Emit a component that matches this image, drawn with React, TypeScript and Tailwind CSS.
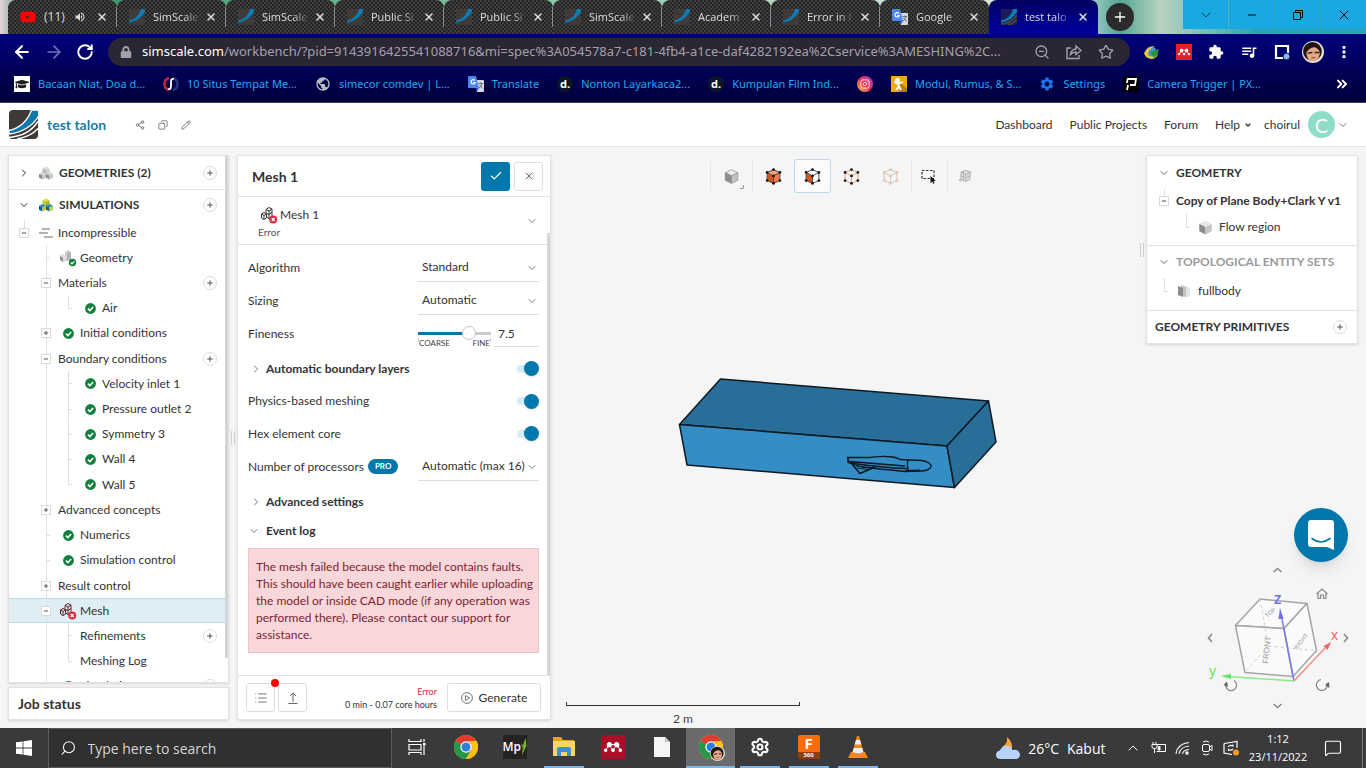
import React from "react";
import {
  ArrowLeft, ArrowRight, RotateCw, ZoomOut, Star, EllipsisVertical,
  X, Plus, Minus, ChevronDown, ChevronRight, ChevronUp, ChevronsRight, Share2, Copy,
  Pencil, Check, List, Search, Instagram, Settings as Cog, MessageSquare,
} from "lucide-react";
import { FaYoutube, FaLock, FaGraduationCap } from "react-icons/fa";
import { MdExtension, MdOutlineQueueMusic, MdSettings, MdPublic, MdVolumeUp } from "react-icons/md";
import { SiMendeley } from "react-icons/si";

/* ---------- drawings ---------- */

function Logo({ className }: { className: string }) {
  return (
    <svg viewBox="0 0 29 29" className={className} aria-hidden="true">
      <path d="M4 0H29V25Q29 29 25 29H3Q0 29 0 26V4Q0 0 4 0Z" fill="#403a37" />
      <path d="M0 20.500C11 18 18.500 11 22.500 0H30V5.500C23 17 12 22.500 0 24Z" fill="#0e79ad" stroke="#fff" strokeWidth="1.300" />
      <path d="M0 27.500C13 26.500 23 21 29 11.500" fill="none" stroke="#fff" strokeWidth="1.500" />
      <path d="M8 29C17 27.500 24 24 29 18.500" fill="none" stroke="#fff" strokeWidth="1.400" />
    </svg>
  );
}

function Favicon({ active }: { active?: boolean }) {
  return (
    <svg viewBox="0 0 16 16" className="size-4 shrink-0" aria-hidden="true">
      <rect width="16" height="16" fill={active ? "#1d1a55" : "#3f3b39"} />
      <path d="M0 11.500C6 10.500 10.500 6 12 0H16V2.500C13 8.500 7 12.500 0 13.500Z" fill="#0e7bb5" />
      {active && (
        <g fill="none" stroke="#4a4542" strokeWidth="2">
          <path d="M0 15C7 14.500 12.500 11 16 6" />
          <path d="M7 16C11 15 14 13 16 10.500" />
        </g>
      )}
    </svg>
  );
}

function TranslateIcon() {
  return (
    <svg viewBox="0 0 16 16" className="size-4 shrink-0" aria-hidden="true">
      <path d="M7 4H15Q16 4 16 5V15Q16 16 15 16H9Z" fill="#d5d8dc" />
      <path d="M1 0H8L11 12H1Q0 12 0 11V1Q0 0 1 0Z" fill="#4b86ee" />
      <path d="M7.500 12H11L9 15Z" fill="#2a56c6" />
      <path d="M7 4.500A2.200 2.200 0 1 0 7.300 6.500H5.200" fill="none" stroke="#fff" strokeWidth="1.200" />
      <path d="M10.500 7.500H15M12.700 6.500V7.500M14 7.500Q13 11 11 12M11.500 9L14.500 12.500" fill="none" stroke="#5f6b7a" strokeWidth="1" />
    </svg>
  );
}

function Cube({ top, left, right, edge, className }: { top: string; left: string; right: string; edge?: string; className: string }) {
  return (
    <svg viewBox="0 0 24 24" className={className} aria-hidden="true">
      <g stroke={edge ?? "none"} strokeWidth="1.200" strokeLinejoin="round">
        <path d="M12 1L22 6L12 11L2 6Z" fill={top} />
        <path d="M2 6L12 11V23L2 18Z" fill={left} />
        <path d="M22 6L12 11V23L22 18Z" fill={right} />
      </g>
    </svg>
  );
}

function MiniCube({ x, y, c }: { x: number; y: number; c: string[] }) {
  return (
    <g transform={`translate(${x} ${y})`}>
      <path d="M3.500 0L7 1.800L3.500 3.600L0 1.800Z" fill={c[0]} />
      <path d="M0 1.800L3.500 3.600V7.500L0 5.700Z" fill={c[1]} />
      <path d="M7 1.800L3.500 3.600V7.500L7 5.700Z" fill={c[2]} />
    </g>
  );
}

function Cubes({ color }: { color?: boolean }) {
  const a = color ? ["#d9dc3c", "#c4cc2b", "#a9b526"] : ["#dcdcdc", "#b9b9b9", "#cfcfcf"];
  const b = color ? ["#2b8cbd", "#0a5f8c", "#c4cc2b"] : ["#d2d2d2", "#8f8f8f", "#c6c6c6"];
  return (
    <svg viewBox="0 0 14 14" className="ml-[9px] size-[14px]" aria-hidden="true">
      <MiniCube x={3.5} y={0.5} c={a} />
      <MiniCube x={0} y={6} c={b} />
      <MiniCube x={7} y={6} c={b} />
    </svg>
  );
}

function GeometryIcon() {
  return (
    <svg viewBox="0 0 18 18" className="size-[18px]" aria-hidden="true">
      <path d="M6 3L9 1L12 3V10L8 12L6 11Z" fill="#cfcfcf" />
      <path d="M8 4L12 3V10L8 12Z" fill="#b4b4b4" />
      <path d="M1 6L4 5L7 7V12L4 13L1 11Z" fill="#dedede" />
      <path d="M1 7L4 9V13L1 11Z" fill="#909090" />
      <circle cx="13.500" cy="13.500" r="3.700" fill="#10803f" />
      <path d="M11.700 13.500L13 14.900L15.400 12.300" fill="none" stroke="#fff" strokeWidth="1.200" />
    </svg>
  );
}

function MeshIcon({ dark }: { dark?: boolean }) {
  const s = dark ? "#333" : "#5c2229";
  return (
    <svg viewBox="0 0 18 18" className="size-[18px]" aria-hidden="true">
      <g fill="none" stroke={s} strokeWidth="1">
        <path d="M6 3.500L9 1.500L12 3V10L9 12.500L6.500 11M6 3.500L9 5L12 3M9 5V12.500M6 3.500V7M6.500 7.500L9 8.500L12 6.500" />
        <path d="M1.500 8L4 6.500L6.500 8V12L4 13.500L1.500 12ZM1.500 8L4 9.500L6.500 8M4 9.500V13.500" />
      </g>
      <circle cx="13.200" cy="13.500" r="4" fill="#df2b3b" />
      <path d="M11.700 12L14.700 15M14.700 12L11.700 15" stroke="#fff" strokeWidth="1.200" />
    </svg>
  );
}

function OkIcon() {
  return (
    <svg viewBox="0 0 12 12" className="size-[11px]" aria-hidden="true">
      <circle cx="6" cy="6" r="5.900" fill="#10803f" />
      <path d="M3.200 6.100L5.300 8.200L8.900 4.300" fill="none" stroke="#fff" strokeWidth="1.700" />
    </svg>
  );
}

function FlowIcon() {
  return (
    <svg viewBox="0 0 14 10" className="h-[10px] w-[14px]" aria-hidden="true">
      <path d="M3 1H11M0 5H9M5 9H14" stroke="#9b9b9b" strokeWidth="1.300" />
    </svg>
  );
}

type PickStyle = "volume" | "face" | "edge" | "vertex";

function PickCube({ kind }: { kind: PickStyle }) {
  const line = kind === "edge" ? "#eb9b78" : kind === "vertex" ? "#c9c4c2" : "#4a4a4a";
  const dot = kind === "vertex" ? "#f2bfa9" : "#161616";
  const pts = [[8, 1.5], [14, 4.2], [14, 11.8], [8, 14.5], [2, 11.8], [2, 4.2], [8, 7.5]];
  return (
    <svg viewBox="0 0 16 16" className="size-[17px]" aria-hidden="true">
      {kind === "volume" && (
        <g>
          <path d="M8 1.500L14 4.200L8 7.500L2 4.200Z" fill="#f2a07c" />
          <path d="M2 4.200L8 7.500V14.500L2 11.800Z" fill="#dd5317" />
          <path d="M14 4.200L8 7.500V14.500L14 11.800Z" fill="#ee7d4c" />
        </g>
      )}
      {kind === "face" && (
        <g>
          <path d="M8 1.500L14 4.200V11.800L8 14.500L2 11.800V4.200Z" fill="#fff" />
          <path d="M2 4.200L8 7.500V14.500L2 11.800Z" fill="#dd5317" />
        </g>
      )}
      <path d="M8 1.500L14 4.200V11.800L8 14.500L2 11.800V4.200ZM2 4.200L8 7.500L14 4.200M8 7.500V14.500" fill="none" stroke={line} strokeWidth="0.900" />
      {pts.map(([x, y]) => (
        <circle key={`${x}-${y}`} cx={x} cy={y} r="1.300" fill={dot} />
      ))}
    </svg>
  );
}

function Model() {
  return (
    <svg viewBox="676 374 324 118" className="h-[118px] w-[324px]" role="img" aria-label="Flow region model">
      <g stroke="#0d1a22" strokeWidth="1.500" strokeLinejoin="round">
        <path d="M720.500 379L988.500 401L947 446L679.500 424.500Z" fill="#296d99" />
        <path d="M679.500 424.500L947 446L954.500 487.500L687 465Z" fill="#348dc5" />
        <path d="M947 446L988.500 401L996 442L954.500 487.500Z" fill="#296d99" />
      </g>
      <g fill="none" stroke="#0a1a26" strokeWidth="1.300" strokeLinejoin="round">
        <path d="M847.500 457.500H870C876 457 880 456 886 456.500C893 456.500 897 457.500 900 459.500L922 460.500C928 461.500 931.500 464 931 466.500C930 469.500 926 471 920 471L905 471.500C890 470 875 468.500 862 467L849 463Z" />
        <path d="M852 464L860 473.500L875 467" strokeWidth="1.700" />
        <path d="M848 457V463M849 461.500L905 466M850 463C870 466 885 468 907 468.500M908 459.500Q906.500 465 908.500 471" />
        <path d="M856 466L869 467.500M857 468L868 469.500" strokeWidth="0.900" />
        <path d="M905 471L920 470.500" strokeWidth="2" />
      </g>
    </svg>
  );
}

function NavCube() {
  return (
    <svg viewBox="1198 562 160 154" className="h-[154px] w-[160px]" role="img" aria-label="View orientation">
      <g fill="#fafafa" stroke="#a5a5a5" strokeWidth="1.500" strokeLinejoin="round">
        <path d="M1260 599L1307 603.500L1284 628.500L1235.500 625.500Z" />
        <path d="M1235.500 625.500L1284 628.500L1293 676.500L1245 672.500Z" />
        <path d="M1284 628.500L1307 603.500L1316.500 650.500L1293 676.500Z" />
      </g>
      <path d="M1260 599L1268.500 646L1316 650.500M1268.500 646L1245 672" fill="none" stroke="#cfcfcf" strokeDasharray="3 3" />
      <g fill="#999" fontFamily="Liberation Sans, sans-serif" fontSize="8">
        <text transform="translate(1268 664) rotate(-84)">FRONT</text>
        <text transform="translate(1297 650) rotate(-52)" fontSize="6">RIGHT</text>
        <text transform="translate(1267 618) rotate(-40)" fontSize="6">TOP</text>
      </g>
      <path d="M1294 681L1281 614" stroke="#7c7cf0" strokeWidth="1.500" />
      <path d="M1280 608L1283.500 619L1278.500 619Z" fill="#6c6cf5" />
      <path d="M1294 681L1228 676.500" stroke="#86ee86" strokeWidth="1.500" />
      <path d="M1221 676L1231 674V679Z" fill="#5ee55e" />
      <path d="M1294 681L1326 647" stroke="#f78d8d" strokeWidth="1.500" />
      <path d="M1331 642L1327.500 650L1323.500 646Z" fill="#f06565" />
      <g fontFamily="Liberation Sans, sans-serif" fontSize="12" fontWeight="700">
        <text x="1274" y="604" fill="#6c6cf5">Z</text>
        <text x="1209" y="676" fill="#5ee55e" fontSize="14" fontWeight="400">y</text>
        <text x="1331" y="640" fill="#f06565" fontSize="14" fontWeight="400">x</text>
      </g>
      <g fill="none" stroke="#8a8a8a" strokeWidth="1.600">
        <path d="M1273.500 572L1277.500 568.500L1281.500 572M1273.500 704L1277.500 707.500L1281.500 704M1212 634L1208.500 638L1212 642M1344 634L1347.500 638L1344 642" />
        <path d="M1316.500 594L1322 589L1327.500 594M1318 593V598.500H1320.500V595H1323.500V598.500H1326V593" strokeWidth="1.200" />
        <path d="M1226 683A5.500 5.500 0 1 0 1234 680.500" strokeWidth="1.200" />
        <path d="M1327 683A5.500 5.500 0 1 1 1321 679.500" strokeWidth="1.200" />
      </g>
      <path d="M1223.500 685L1227 681.500L1228 687ZM1329 682L1325 685L1329.500 688Z" fill="#666" />
    </svg>
  );
}

function ChromeIcon() {
  return (
    <svg viewBox="0 0 24 24" className="size-6" aria-hidden="true">
      <circle cx="12" cy="12" r="12" fill="#fbc116" />
      <path d="M12 12L1.600 6A12 12 0 0 1 22.400 6Z" fill="#e33b2e" />
      <path d="M1.600 6A12 12 0 0 0 12 24L17.200 15L12 12Z" fill="#279847" />
      <path d="M22.400 6A12 12 0 0 1 12 24L17.200 15A6 6 0 0 0 12 6Z" fill="#fbc116" />
      <circle cx="12" cy="12" r="5.700" fill="#fff" />
      <circle cx="12" cy="12" r="4.500" fill="#2f7de1" />
    </svg>
  );
}

function Face({ className }: { className: string }) {
  return (
    <svg viewBox="0 0 20 20" className={className} aria-hidden="true">
      <circle cx="10" cy="10" r="10" fill="#e9dccf" />
      <circle cx="9.500" cy="9.500" r="8.500" fill="#1f1512" />
      <path d="M4 10C7 7 10 4 14 7C17 9 16.500 13 14.500 16C12 19 8 18.500 6 16.500C4.500 15 4 12.500 4 10Z" fill="#e3ab88" />
      <path d="M5 11L9.500 10.500M11.500 10.500L15.500 10.500" stroke="#3a1f18" strokeWidth="1.300" />
      <path d="M8.500 15Q10.500 16 12 14.500" stroke="#a03c35" fill="none" />
    </svg>
  );
}

/* ---------- browser ---------- */

const tabs = ["SimScale", "SimScale", "Public Si", "Public Si", "SimScale", "Academ", "Error in l"];

function TabShell({ children, active, divider }: { children: React.ReactNode; active?: boolean; divider?: boolean }) {
  return (
    <div
      role="tab"
      aria-selected={!!active}
      className={
        "flex h-[34px] w-[109px] shrink-0 items-center rounded-t-lg pr-[9px] pl-3 " +
        (active
          ? "bg-gradient-to-b from-[#000060] to-[#0000a0]"
          : "bg-[repeating-conic-gradient(#252525_0_25%,#3e3e3e_0_50%)] bg-[length:4px_4px]")
      }
    >
      {children}
      <button aria-label="Close tab" className="ml-auto flex size-3 items-center justify-center text-[#dedede]">
        <X className="size-3 shrink-0" strokeWidth={3} />
      </button>
      {divider && <span className="-mr-[9px] ml-2 h-5 w-px bg-[#8b8b8b]" />}
    </div>
  );
}

const fade = "ml-2 w-[48px] overflow-hidden whitespace-nowrap [mask-image:linear-gradient(to_right,black_65%,transparent)]";

function TabStrip() {
  const control = "flex h-[29px] w-[45px] items-center justify-center bg-[#18a9e2] text-black";
  return (
    <div className="flex h-[34px] bg-[linear-gradient(to_right,#e6d3dc_0,#2f8f5f_2%,#8cc9a4_40%,#e4ede4_78%,#54a597_82%,#b9d3c0_85%,#2ca2b4_92%)] pl-2 text-[11px] text-[#dcdcdc]">
      <div role="tablist" className="flex">
        <TabShell divider>
          <FaYoutube className="size-4 text-[#ff0000]" />
          <span className="ml-2 text-[12px]">(11)</span>
          <MdVolumeUp className="ml-auto size-3" />
        </TabShell>
        {tabs.map((t, i) => (
          <TabShell key={i} divider>
            <Favicon />
            <span className={fade}>{t}</span>
          </TabShell>
        ))}
        <TabShell>
          <TranslateIcon />
          <span className={fade}>Google</span>
        </TabShell>
        <TabShell active>
          <Favicon active />
          <span className={fade}>test talo</span>
        </TabShell>
      </div>
      <button aria-label="New tab" className="mt-[3px] ml-2 flex size-7 items-center justify-center rounded-full bg-[#2b2b2b] text-white">
        <Plus className="size-4" strokeWidth={2} />
      </button>
      <div className="ml-auto flex gap-px">
        <button aria-label="Search tabs" className={control}><ChevronDown className="size-4" strokeWidth={1} /></button>
        <button aria-label="Minimise" className={control}><Minus className="size-3" strokeWidth={2} /></button>
        <button aria-label="Restore" className={control}>
          <svg viewBox="0 0 10 10" className="size-[10px]" fill="none" stroke="#000"><path d="M.5 2.500H7.500V9.500H.5ZM2.500 2.500V.5H9.500V7.500H7.500" /></svg>
        </button>
        <button aria-label="Close" className={control}><X className="size-4" strokeWidth={1.5} /></button>
      </div>
    </div>
  );
}

function AddressBar() {
  return (
    <div className="flex h-[34px] items-center pt-[2px] pr-[14px] text-white">
      <div className="flex w-[108px] items-center gap-3 pl-3">
        <button aria-label="Back"><ArrowLeft className="size-5" strokeWidth={2.5} /></button>
        <button aria-label="Forward" className="text-[#7070b8]"><ArrowRight className="size-5" strokeWidth={2} /></button>
        <button aria-label="Reload"><RotateCw className="size-[18px]" strokeWidth={2.5} /></button>
      </div>
      <div className="flex h-7 min-w-0 flex-1 items-center rounded-full bg-[#2a2635] pr-2 pl-3 text-[#a3a1a9]">
        <FaLock className="size-3 shrink-0" />
        <div className="ml-[10px] min-w-0 flex-1 overflow-hidden font-['Noto_Sans',sans-serif] text-[13px] whitespace-nowrap">
          <span className="text-white">simscale.com</span>/workbench/?pid=9143916425541088716&amp;mi=spec%3A054578a7-c181-4fb4-a1ce-daf4282192ea%2Cservice%3AMESHING%2C...
        </div>
        <div className="flex shrink-0 gap-4 pr-2 pl-2">
          <button aria-label="Zoom"><ZoomOut className="size-4" /></button>
          <button aria-label="Share">
            <svg viewBox="0 0 16 16" className="size-4" fill="none" stroke="currentColor" strokeWidth="1.400"><path d="M5 4H1V14.500H13V11M4.500 10.500C5 7 7 5.200 10 5V2L15 6.500L10 10.500V8C7.500 8 6 8.800 4.500 10.500Z" /></svg>
          </button>
          <button aria-label="Bookmark"><Star className="size-4" /></button>
        </div>
      </div>
      <div className="ml-[14px] flex shrink-0 items-center gap-4">
        <svg viewBox="0 0 16 16" className="size-4" aria-label="Download manager">
          <circle cx="7" cy="8" r="5.500" fill="#4a94d0" />
          <path d="M0 9Q4 2 11 2Q4 5 4 11Q10 15 14 9Q13 15 7 15Q1 14 0 9Z" fill="#e7c93a" />
          <path d="M6 8L15 5L13 11L10 14Z" fill="#22963c" />
        </svg>
        <span className="flex size-4 items-center justify-center bg-[#e0202c]"><SiMendeley className="size-3" /></span>
        <button aria-label="Extensions"><MdExtension className="size-4" /></button>
        <button aria-label="Media"><MdOutlineQueueMusic className="size-[18px]" /></button>
        <button aria-label="Side panel">
          <svg viewBox="0 0 16 16" className="size-4"><path d="M2 2H14V14H2Z" fill="none" stroke="#fff" strokeWidth="2.200" /><circle cx="12.500" cy="12.500" r="3.500" fill="#8ab4f8" stroke="#00004a" strokeWidth="1" /></svg>
        </button>
        <Face className="-mx-1 size-[22px]" />
        <button aria-label="Menu"><EllipsisVertical className="size-4" strokeWidth={3} /></button>
      </div>
    </div>
  );
}

const badge = "flex size-4 items-center justify-center rounded-full bg-[#0b1626] text-[11px] font-bold text-white";

const bookmarks: { label: string; icon: React.ReactNode }[] = [
  { label: "Bacaan Niat, Doa d...", icon: <span className="flex size-4 items-center justify-center bg-white"><FaGraduationCap className="size-[14px] text-[#1c1c1c]" /></span> },
  {
    label: "10 Situs Tempat Me...",
    icon: (
      <svg viewBox="0 0 16 16" className="size-4"><path d="M6 2A6 6.200 0 0 0 6 14" fill="none" stroke="#c3242f" strokeWidth="2.600" /><path d="M10 2A6 6.200 0 0 1 10 14" fill="none" stroke="#27307d" strokeWidth="2.600" /><path d="M11 3Q8 2 8 6V10Q8 14 5 13" fill="none" stroke="#fff" strokeWidth="1.800" /></svg>
    ),
  },
  { label: "simecor comdev | L...", icon: <MdPublic className="size-4 text-[#b8bcc2]" /> },
  { label: "Translate", icon: <TranslateIcon /> },
  { label: "Nonton Layarkaca2...", icon: <span className={badge}>d.</span> },
  { label: "Kumpulan Film Ind...", icon: <span className={badge}>d.</span> },
  {
    label: "",
    icon: (
      <span className="flex size-4 items-center justify-center rounded-full bg-gradient-to-tr from-[#fdb436] via-[#ee2a55] to-[#b52ac8] text-white"><Instagram className="size-[10px]" /></span>
    ),
  },
  {
    label: "Modul, Rumus, & S...",
    icon: (
      <svg viewBox="0 0 16 16" className="size-4"><rect width="16" height="16" fill="#f0a714" /><path d="M9 6L16 13V16H8Z" fill="#b37c0c" /><circle cx="6.500" cy="4.500" r="2.500" fill="#fff" /><path d="M3 6L7 8L12 6M7.500 7V11L5 14M8 10L10 14" stroke="#fff" strokeWidth="1.800" fill="none" /></svg>
    ),
  },
  { label: "Settings", icon: <MdSettings className="size-4 text-[#1a73e8]" /> },
  {
    label: "Camera Trigger | PX...",
    icon: (
      <svg viewBox="0 0 16 16" className="size-4"><rect width="16" height="16" rx="2" fill="#000" /><path d="M4 3H13L12 9H7M4.500 3L4 7M5 9L4 14" fill="none" stroke="#fff" strokeWidth="1.800" /></svg>
    ),
  },
];

function BookmarkBar() {
  return (
    <nav aria-label="Bookmarks" className="flex h-[34px] items-center gap-[18px] pr-4 pb-[2px] pl-[14px] font-['Noto_Sans',sans-serif] text-[11px] text-[#1fa8f5]">
      {bookmarks.map((b, i) => (
        <a key={i} href="#" aria-label={b.label || "Instagram"} className="flex shrink-0 items-center gap-2">
          {b.icon}
          {b.label && <span>{b.label}</span>}
        </a>
      ))}
      <button aria-label="More bookmarks" className="ml-auto text-white"><ChevronsRight className="size-4" strokeWidth={3} /></button>
    </nav>
  );
}

/* ---------- workbench ---------- */

function Header() {
  return (
    <header className="flex h-11 shrink-0 items-center border-b border-[#e4e4e4] bg-white pr-[17px] pl-[9px] text-[12px] text-[#333]">
      <Logo className="size-[29px]" />
      <h1 className="ml-[9px] text-[14px] font-bold text-[#1b7ba6]">test talon</h1>
      <div className="ml-[29px] flex gap-[13px] text-[#666]">
        <button aria-label="Share project"><Share2 className="size-[10px]" strokeWidth={2} /></button>
        <button aria-label="Copy project"><Copy className="size-[10px] -scale-x-100" strokeWidth={2} /></button>
        <button aria-label="Edit project"><Pencil className="size-[10px]" strokeWidth={2} /></button>
      </div>
      <nav className="ml-auto flex items-center gap-[17px]">
        <a href="#">Dashboard</a>
        <a href="#">Public Projects</a>
        <a href="#">Forum</a>
        <button className="flex items-center gap-1">Help<ChevronDown className="size-2" strokeWidth={4} /></button>
      </nav>
      <button className="ml-3 flex items-center">
        choirul
        <span className="ml-2 flex size-[27px] items-center justify-center rounded-full bg-[#8eddc8] text-[20px] text-white">C</span>
        <ChevronDown className="ml-[2px] size-3 text-[#8a6a62]" strokeWidth={2} />
      </button>
    </header>
  );
}

function AddButton({ label }: { label: string }) {
  return (
    <button aria-label={"Add " + label} className="ml-auto flex size-[14px] shrink-0 items-center justify-center rounded-full border border-[#d9dde0] bg-white text-[#555]">
      <Plus className="size-2 shrink-0" strokeWidth={3} />
    </button>
  );
}

type Row = {
  label: string;
  depth: 0 | 1 | 2;
  icon?: React.ReactNode;
  box?: "+" | "-";
  add?: boolean;
  last?: boolean;
  selected?: boolean;
};

const rows: Row[] = [
  { label: "Incompressible", depth: 0, box: "-", icon: <FlowIcon /> },
  { label: "Geometry", depth: 1, icon: <GeometryIcon /> },
  { label: "Materials", depth: 1, box: "-", add: true },
  { label: "Air", depth: 2, icon: <OkIcon />, last: true },
  { label: "Initial conditions", depth: 1, box: "+", icon: <OkIcon /> },
  { label: "Boundary conditions", depth: 1, box: "-", add: true },
  { label: "Velocity inlet 1", depth: 2, icon: <OkIcon /> },
  { label: "Pressure outlet 2", depth: 2, icon: <OkIcon /> },
  { label: "Symmetry 3", depth: 2, icon: <OkIcon /> },
  { label: "Wall 4", depth: 2, icon: <OkIcon /> },
  { label: "Wall 5", depth: 2, icon: <OkIcon />, last: true },
  { label: "Advanced concepts", depth: 1, box: "+" },
  { label: "Numerics", depth: 1, icon: <OkIcon /> },
  { label: "Simulation control", depth: 1, icon: <OkIcon /> },
  { label: "Result control", depth: 1, box: "+" },
  { label: "Mesh", depth: 1, box: "-", icon: <MeshIcon />, selected: true },
  { label: "Refinements", depth: 2, add: true },
  { label: "Meshing Log", depth: 2, last: true },
  { label: "Simulation Runs", depth: 1, icon: <span className="size-[11px] rounded-full bg-[#df2b3b]" />, add: true },
];

const cell = "flex w-[22px] shrink-0 self-stretch items-center justify-center ";
const rail = "bg-[linear-gradient(#e0e0e0,#e0e0e0)] bg-[length:1px_100%] bg-center bg-no-repeat ";
const railTop = "bg-[linear-gradient(#e0e0e0,#e0e0e0)] bg-[length:1px_50%] bg-top bg-no-repeat ";

function Expander({ sign }: { sign: "+" | "-" }) {
  const Icon = sign === "+" ? Plus : Minus;
  return (
    <button aria-label={sign === "+" ? "Expand" : "Collapse"} className="flex size-[10px] items-center justify-center border border-[#dadada] bg-white text-[#555]">
      <Icon className="size-[6px] shrink-0" strokeWidth={4} />
    </button>
  );
}

function Stub() {
  return <span className="mr-auto ml-[11px] h-px w-1 bg-[#e0e0e0]" />;
}

function TreeRow({ row }: { row: Row }) {
  return (
    <li className={"flex items-center pr-2 pl-1 " + (row.selected ? "border-y border-[#b9dbe8] bg-[#dfeef5]" : "")}>
      <span className={cell + (row.depth === 0 ? railTop : "")}>{row.depth === 0 && row.box && <Expander sign={row.box} />}</span>
      {row.depth > 0 && <span className={cell + rail}>{row.depth === 1 && (row.box ? <Expander sign={row.box} /> : <Stub />)}</span>}
      {row.depth > 1 && <span className={cell + (row.last ? railTop : rail)}><Stub /></span>}
      {row.icon && <span className={cell}>{row.icon}</span>}
      <a href="#" className="ml-px whitespace-nowrap">{row.label}</a>
      {row.add && <AddButton label={row.label} />}
    </li>
  );
}

function SideTree() {
  return (
    <aside className="flex w-[221px] shrink-0 flex-col gap-1">
      <div className="flex min-h-0 flex-1 border border-[#e2e2e2] bg-white shadow-sm">
        <div className="min-w-0 flex-1 overflow-hidden">
          <div className="flex h-[34px] items-center border-b border-[#e2e2e2] pr-2 pl-[9px]">
            <ChevronRight className="size-3" strokeWidth={2} />
            <Cubes />
            <h2 className="ml-[6px] font-bold">GEOMETRIES (2)</h2>
            <AddButton label="geometry" />
          </div>
          <div className="flex h-[30px] items-center pr-2 pl-[9px]">
            <ChevronDown className="size-3" strokeWidth={2} />
            <Cubes color />
            <h2 className="ml-[6px] font-bold">SIMULATIONS</h2>
            <AddButton label="simulation" />
          </div>
          <ul className="grid h-[479px] auto-rows-fr">
            {rows.map((r) => <TreeRow key={r.label} row={r} />)}
          </ul>
        </div>
        <div className="mb-6 w-[3px] bg-[#d3d6d6]" />
      </div>
      <button className="h-[33px] border border-[#e2e2e2] bg-white pl-[9px] text-left text-[14px] font-bold shadow-sm">Job status</button>
    </aside>
  );
}

function Handle({ className }: { className?: string }) {
  return <span className={"h-[14px] w-1 shrink-0 border-x border-[#cfcfcf] " + (className ?? "")} />;
}

function SelectField({ id, value }: { id: string; value: string }) {
  return (
    <div className="relative ml-auto w-[121px]">
      <select id={id} className="h-[28px] w-full appearance-none border-b border-[#dcdcdc] bg-transparent pl-1 outline-none">
        <option>{value}</option>
      </select>
      <ChevronDown className="pointer-events-none absolute top-2 right-[1px] size-3 text-[#777]" strokeWidth={2} />
    </div>
  );
}

function Toggle({ id }: { id: string }) {
  return (
    <input
      id={id}
      type="checkbox"
      defaultChecked
      className="ml-auto flex h-2 w-[22px] appearance-none items-center justify-end rounded-full bg-[#d5edf8] before:size-[15px] before:shrink-0 before:rounded-full before:bg-[#0277ab] before:shadow"
    />
  );
}

function MeshPanel() {
  const line = "flex h-[33px] items-center ";
  const iconButton = "flex size-[29px] items-center justify-center rounded-[3px] border border-[#dedede] bg-white text-[#666]";
  return (
    <section aria-label="Mesh settings" className="flex w-[314px] shrink-0 flex-col border border-[#e2e2e2] bg-white shadow-sm">
      <div className="flex h-[41px] shrink-0 items-center border-b border-[#e2e2e2] pr-[7px] pl-[14px]">
        <h2 className="text-[14px] font-bold">Mesh 1</h2>
        <button aria-label="Apply" className="ml-auto flex size-[29px] items-center justify-center rounded-[3px] bg-[#0277ab] text-white"><Check className="size-[14px]" strokeWidth={2} /></button>
        <button aria-label="Close panel" className={iconButton + " ml-1"}><X className="size-3" strokeWidth={2} /></button>
      </div>
      <div className="flex h-12 shrink-0 items-center border-b border-[#e2e2e2] pr-3 pl-[20px]">
        <div className="pt-1">
          <div className="flex h-[18px] items-center gap-[2px] pl-[2px]"><MeshIcon dark />Mesh 1</div>
          <div className="text-[10px] leading-4 text-[#555]">Error</div>
        </div>
        <ChevronDown className="ml-auto size-3 text-[#777]" strokeWidth={2} />
      </div>
      <div className="flex min-h-0 flex-1">
        <div className="min-w-0 flex-1 overflow-hidden pt-[6px] pr-2 pl-[10px]">
          <div className={line}><label htmlFor="algorithm">Algorithm</label><SelectField id="algorithm" value="Standard" /></div>
          <div className={line}><label htmlFor="sizing">Sizing</label><SelectField id="sizing" value="Automatic" /></div>
          <div className={line}>
            <label htmlFor="fineness">Fineness</label>
            <div className="mt-[13px] ml-auto w-[73px]">
              <input
                id="fineness"
                type="range"
                min="0"
                max="10"
                step="0.5"
                defaultValue="7.5"
                className="block h-[3px] w-full appearance-none bg-[linear-gradient(to_right,#0277ab_70%,#cccccc_70%)] [&::-webkit-slider-thumb]:size-[14px] [&::-webkit-slider-thumb]:appearance-none [&::-webkit-slider-thumb]:rounded-full [&::-webkit-slider-thumb]:border [&::-webkit-slider-thumb]:border-[#c4c4c4] [&::-webkit-slider-thumb]:bg-white"
              />
              <div className="mt-[3px] flex justify-between bg-[linear-gradient(to_right,#ccc_1px,transparent_1px,transparent_72px,#ccc_72px)] bg-[length:100%_4px] bg-no-repeat px-px text-[8px] leading-[11px] text-[#444]"><span>COARSE</span><span>FINE</span></div>
            </div>
            <input aria-label="Fineness value" defaultValue="7.5" className="ml-[3px] h-[27px] w-[45px] border-b border-[#dcdcdc] pl-1 outline-none" />
          </div>
          <div className={line + "mt-[2px]"}>
            <ChevronRight className="ml-[2px] size-3 text-[#777]" strokeWidth={2} />
            <label htmlFor="layers" className="ml-1 font-bold">Automatic boundary layers</label>
            <Toggle id="layers" />
          </div>
          <div className="flex h-8 items-center"><label htmlFor="physics">Physics-based meshing</label><Toggle id="physics" /></div>
          <div className={line}><label htmlFor="hex">Hex element core</label><Toggle id="hex" /></div>
          <div className={line}>
            <label htmlFor="processors">Number of processors</label>
            <span className="ml-1 rounded-full bg-[#0277ab] px-[7px] text-[8px] leading-[15px] font-bold text-white">PRO</span>
            <SelectField id="processors" value="Automatic (max 16)" />
          </div>
          <button className="mt-1 flex h-[29px] items-center font-bold"><ChevronRight className="mr-1 ml-[2px] size-3 text-[#777]" strokeWidth={2} />Advanced settings</button>
          <button className="flex h-[29px] items-center font-bold"><ChevronDown className="mr-[6px] size-3 text-[#777]" strokeWidth={2} />Event log</button>
          <p className="mt-[3px] border border-[#f0c3c9] bg-[#f8d7da] py-[9px] pr-1 pl-[7px] leading-[17px] text-[#7d2430]">
            The mesh failed because the model contains faults. This should have been caught earlier while uploading the model or inside CAD mode (if any operation was performed there). Please contact our support for assistance.
          </p>
        </div>
        <div className="-mt-3 w-[3px] bg-[#d3d6d6]" />
      </div>
      <div className="flex h-11 shrink-0 items-center border-t border-[#e2e2e2] pr-[9px] pl-2">
        <div className="relative">
          <button aria-label="Event list" className={iconButton}><List className="size-[14px]" strokeWidth={1.5} /></button>
          <span className="absolute -top-1 -right-1 size-2 rounded-full bg-[#ff0000]" />
        </div>
        <button aria-label="Upload" className={iconButton + " ml-[3px]"}>
          <svg viewBox="0 0 12 12" className="size-3" fill="none" stroke="currentColor"><path d="M6 10V1M3 4L6 1L9 4M1.500 11.500H10.500" /></svg>
        </button>
        <div className="ml-auto text-right text-[9px] leading-[13px]">
          <div className="text-[#e0303c]">Error</div>
          <div>0 min - 0.07 core hours</div>
        </div>
        <button className="ml-[10px] flex h-[29px] w-[94px] items-center justify-center gap-[6px] rounded-[3px] border border-[#dedede]">
          <svg viewBox="0 0 12 12" className="size-3" fill="none" stroke="#666" strokeWidth="0.900"><circle cx="6" cy="6" r="5.400" /><path d="M4.500 3.500L8.500 6L4.500 8.500Z" /></svg>
          Generate
        </button>
      </div>
    </section>
  );
}

function Toolbar() {
  const b = "flex h-[34px] w-[37px] items-center justify-center ";
  const sep = "h-[30px] w-px bg-[#e6e6e6]";
  return (
    <div role="toolbar" aria-label="View" className="flex items-center justify-center gap-[2px] pt-1 pr-[7px]">
      <span className={sep} />
      <button aria-label="Render mode" className={b + "relative"}>
        <Cube className="size-[15px]" top="#ededed" left="#8d8d8d" right="#c2c2c2" edge="#8f8f8f" />
        <svg viewBox="0 0 4 4" className="absolute right-[6px] bottom-1 size-1"><path d="M3.500 0V3.500H0" fill="none" stroke="#999" /></svg>
      </button>
      <span className={sep} />
      <button aria-label="Pick volumes" className={b}><PickCube kind="volume" /></button>
      <button aria-label="Pick faces" className={b + "rounded-[3px] border border-[#b9dbea] bg-[#fbfbfb]"}><PickCube kind="face" /></button>
      <button aria-label="Pick edges" className={b}><PickCube kind="edge" /></button>
      <button aria-label="Pick vertices" className={b}><PickCube kind="vertex" /></button>
      <span className={sep} />
      <button aria-label="Box select" className="flex w-[31px] justify-center">
        <svg viewBox="0 0 16 16" className="size-4"><path d="M1 2.500H13V10.500H1Z" fill="none" stroke="#333" strokeDasharray="2.500 1.500" strokeWidth="1.200" /><path d="M9.500 8V15L11.200 13.500L12.300 15.800L13.600 15.200L12.500 13L14.800 12.800Z" fill="#111" /></svg>
      </button>
      <span className={sep} />
      <button aria-label="Clip mesh" className="flex w-[31px] justify-center">
        <svg viewBox="0 0 14 14" className="size-[14px]" fill="#dedede" stroke="#b3b3b3"><path d="M3 3L8 1.500L12 3.500V10.500L8 12.500L3 10.500ZM3 3L8 5L12 3.500M8 5V12.500M3 7L8 8.500L12 7M5.500 2V11.500" /><circle cx="2.500" cy="11" r="1" /><circle cx="12" cy="3.500" r="1" /></svg>
      </button>
    </div>
  );
}

function Viewport() {
  return (
    <section aria-label="3D view" className="flex min-w-0 flex-1 flex-col">
      <Toolbar />
      <div className="mt-[181px] mr-[22px] flex justify-center"><Model /></div>
      <div className="mt-auto -mb-2 ml-[15px] w-[234px] text-center text-[12px] leading-[18px] text-[#444]">
        <div className="h-1 border-x border-b border-[#333]" />
        <div className="pt-1">2 m</div>
      </div>
    </section>
  );
}

function RightPanel() {
  return (
    <aside className="flex w-[212px] shrink-0 flex-col">
      <div className="border border-[#e2e2e2] bg-white shadow-sm">
        <div className="flex h-[33px] items-center pl-[11px]"><ChevronDown className="size-3 text-[#666]" strokeWidth={2} /><h2 className="ml-[6px] font-bold">GEOMETRY</h2></div>
        <div className="flex h-6 items-center pl-[6px]">
          <span className={cell + railTop}><Expander sign="-" /></span>
          <span className="ml-[1px] font-bold whitespace-nowrap">Copy of Plane Body+Clark Y v1</span>
        </div>
        <div className="flex h-8 items-center pb-1 pl-7">
          <span className={cell + railTop}><Stub /></span>
          <Cube className="mr-1 ml-px size-[15px]" top="#e8e8e8" left="#8d8d8d" right="#c4c4c4" />
          <span className="ml-[2px]">Flow region</span>
        </div>
        <div className="flex h-[33px] items-center border-t border-[#e2e2e2] pl-[11px]"><ChevronDown className="size-3 text-[#666]" strokeWidth={2} /><h2 className="ml-[6px] font-bold text-[#9a9a9a]">TOPOLOGICAL ENTITY SETS</h2></div>
        <div className="flex h-8 items-center pb-[6px] pl-[6px]">
          <span className={cell + railTop}><Stub /></span>
          <svg viewBox="0 0 14 14" className="ml-[2px] size-[14px]"><path d="M7 2L13 4V12L9 13Z" fill="#e5e5e5" /><path d="M4 1L9 3V13L5 12Z" fill="#c2c2c2" /><path d="M1 2L6 4V13L1 11Z" fill="#8b8b8b" /></svg>
          <span className="ml-[7px]">fullbody</span>
        </div>
        <div className="flex h-[33px] items-center border-t border-[#e2e2e2] pr-[10px] pl-2"><h2 className="font-bold">GEOMETRY PRIMITIVES</h2><AddButton label="primitive" /></div>
      </div>
      <button aria-label="Open chat" className="mt-auto mr-[10px] flex size-[54px] items-center justify-center self-end rounded-full bg-[#0277ab] shadow-lg">
        <svg viewBox="0 0 28 30" className="h-[30px] w-7"><path d="M4 0H24Q27 0 27 3V30L20 27H4Q1 27 1 24V3Q1 0 4 0Z" fill="#fff" /><path d="M5 18.500Q14 25.500 23 18.500" fill="none" stroke="#0277ab" strokeWidth="1.600" strokeLinecap="round" /></svg>
      </button>
      <div className="mb-1 flex justify-end"><NavCube /></div>
    </aside>
  );
}

/* ---------- taskbar ---------- */

function TaskItem({ label, open, active, children }: { label: string; open?: boolean; active?: boolean; children: React.ReactNode }) {
  return (
    <button aria-label={label} className={"flex h-10 w-[49px] flex-col items-center " + (active ? "bg-[#6a6b6d]" : "")}>
      <span className="flex flex-1 items-center">{children}</span>
      <span className={"h-[2px] " + (active ? "w-full bg-[#76b9ed]" : open ? "w-10 bg-[#76b9ed]" : "")} />
    </button>
  );
}

function Taskbar() {
  return (
    <footer className="flex h-10 shrink-0 items-center bg-[#3a3a3c] font-['Open_Sans','Noto_Sans',sans-serif] text-white">
      <button aria-label="Start" className="flex w-12 shrink-0 justify-center">
        <svg viewBox="0 0 16 16" className="size-4" fill="#fff"><path d="M0 2.300L6.600 1.400V7.600H0ZM7.400 1.300L16 0V7.600H7.400ZM0 8.400H6.600V14.600L0 13.700ZM7.400 8.400H16V16L7.400 14.700Z" /></svg>
      </button>
      <label className="flex h-10 w-[344px] items-center border border-[#5a5a5a] bg-[#303030] pl-[11px]">
        <Search className="size-[18px] -scale-x-100" strokeWidth={1.5} />
        <input aria-label="Search" placeholder="Type here to search" className="ml-[11px] w-full bg-transparent text-[14px] outline-none placeholder:text-[#d6d6d6]" />
      </label>
      <TaskItem label="Task view">
        <svg viewBox="0 0 18 16" className="h-4 w-[18px]" fill="none" stroke="#fff" strokeWidth="1.200"><path d="M1 0V2.500H13V0M1 5.500H13V11H1ZM1 16V13.500H13V16M16 0V3M16 7V16" /><rect x="15" y="4" width="2.500" height="2.500" fill="#fff" stroke="none" /></svg>
      </TaskItem>
      <TaskItem label="Chrome"><ChromeIcon /></TaskItem>
      <TaskItem label="Mission Planner">
        <span className="flex size-6 items-center bg-[#232323] text-[12px] font-semibold">Mp<svg viewBox="0 0 6 20" className="h-5 w-[6px]"><path d="M5 0L2 8L0 6L2 11L1 19L6 9Z" fill="#71b32c" /></svg></span>
      </TaskItem>
      <TaskItem label="File Explorer" open>
        <svg viewBox="0 0 24 22" className="h-[22px] w-6"><path d="M1 1H9L11 4H22V20H1Z" fill="#e5a21b" /><path d="M1 5H23V20H1Z" fill="#fcd568" /><path d="M5 20V13Q5 11 7 11H17Q19 11 19 13V20H15V16H9V20Z" fill="#3f8fd6" /></svg>
      </TaskItem>
      <TaskItem label="Mendeley"><span className="flex size-6 items-center justify-center bg-[#a90f26]"><SiMendeley className="size-[18px]" /></span></TaskItem>
      <TaskItem label="Document">
        <svg viewBox="0 0 16 20" className="h-5 w-4"><path d="M0 0H11L16 5V20H0Z" fill="#f5f5f5" /><path d="M11 0V5H16Z" fill="#c4c4c4" /></svg>
      </TaskItem>
      <TaskItem label="Chrome window" active><span className="relative"><ChromeIcon /><Face className="absolute -right-[2px] -bottom-[2px] size-[15px]" /></span></TaskItem>
      <TaskItem label="Settings" open><Cog className="size-5" strokeWidth={2.5} /></TaskItem>
      <TaskItem label="Fusion 360" open>
        <span className="flex h-6 w-[22px] flex-col items-center rounded-[2px] bg-[#f96b0d] text-[15px] leading-[17px] font-bold">F<span className="w-full bg-[#8e3f08] text-center text-[6px] leading-[7px]">360</span></span>
      </TaskItem>
      <TaskItem label="VLC" open>
        <svg viewBox="0 0 20 24" className="h-6 w-5"><path d="M3 17H17L20 23H0Z" fill="#f08a14" /><path d="M9 1H11L16 19Q10 22 4 19Z" fill="#f08a14" /><path d="M8 5H12L13.300 9.500H6.700ZM5.700 13H14.300L15.400 17Q10 19.500 4.600 17Z" fill="#eee" /></svg>
      </TaskItem>
      <div className="ml-auto flex items-center pr-[3px] text-[14px]">
        <svg viewBox="0 0 26 24" className="mr-[7px] h-6 w-[26px]"><path d="M12 1Q13 8 7 11L10 14H17Q18 6 12 1Z" fill="#f3a73b" /><path d="M6 23Q1 23 1 19Q1 15 5 14.500Q7 9.500 12 10Q16 10 17.500 14Q24 13 25 18.500Q25 23 20 23Z" fill="#b8d2f8" /></svg>
        <span>26°C</span>
        <span className="ml-2 w-[37px]">Kabut</span>
        <ChevronUp className="ml-[21px] size-4" strokeWidth={1.5} />
        <span className="ml-[10px] flex items-center gap-2">
          <svg viewBox="0 0 16 14" className="h-[14px] w-4" fill="none" stroke="#fff"><path d="M6 3.500H14.500V10.500H5.500M2 1V3.500M5 1V3.500M1 3.500H6V6Q6 7.500 3.500 7.500Q1 7.500 1 6ZM3.500 7.500V12" /><path d="M7.500 5.500H9V9H7Z" fill="#fff" /></svg>
          <svg viewBox="0 0 16 14" className="h-[14px] w-4" fill="none" stroke="#eee" strokeWidth="1.100"><path d="M1 13Q2 3 14 1.500M4 13Q5 6 14 5M7.500 13Q8 9 14 8.500" /><circle cx="12" cy="12" r="1.200" fill="#fff" /></svg>
          <svg viewBox="0 0 16 16" className="size-4" fill="none" stroke="#fff"><rect x="3.500" y="4.500" width="7" height="7" rx="1.500" /><path d="M10.500 7L13 5.500V10.500L10.500 9M4 2Q7 0 10 2M4 14Q7 16 10 14" /></svg>
          <svg viewBox="0 0 16 16" className="size-4" fill="none" stroke="#fff" strokeWidth="1.200"><path d="M1 3.500L14 1.500V8M1 3.500V13L9 14.500M5 7Q7 4.500 10 6V4.500M10 9Q8 11 5.500 9.500V11" /><circle cx="13" cy="12.500" r="3" fill="#f79a1d" stroke="none" /></svg>
        </span>
        <div className="ml-2 w-[62px] text-center text-[11px] leading-[18px] whitespace-nowrap"><div>1:12</div><div>23/11/2022</div></div>
        <button aria-label="Notifications" className="ml-[15px] flex"><MessageSquare className="size-[18px]" strokeWidth={1.5} /></button>
        <span className="ml-5 h-10 w-px bg-[#777]" />
      </div>
    </footer>
  );
}

export default function App() {
  return (
    <div className="flex h-screen flex-col overflow-hidden bg-[#f5f5f5] font-['Lato',sans-serif] text-[12px] text-[#333]">
      <div className="shrink-0 border-b border-[#3b3b4c] bg-gradient-to-b from-[#0000a0] to-[#00003a] font-['Open_Sans','Noto_Sans',sans-serif]">
        <TabStrip />
        <AddressBar />
        <BookmarkBar />
      </div>
      <Header />
      <main className="flex min-h-0 flex-1 px-2 py-2">
        <SideTree />
        <div className="flex w-2 shrink-0 items-center justify-center"><Handle /></div>
        <MeshPanel />
        <Viewport />
        <Handle className="mt-[88px] mr-[2px] -ml-[6px]" />
        <RightPanel />
      </main>
      <Taskbar />
    </div>
  );
}
